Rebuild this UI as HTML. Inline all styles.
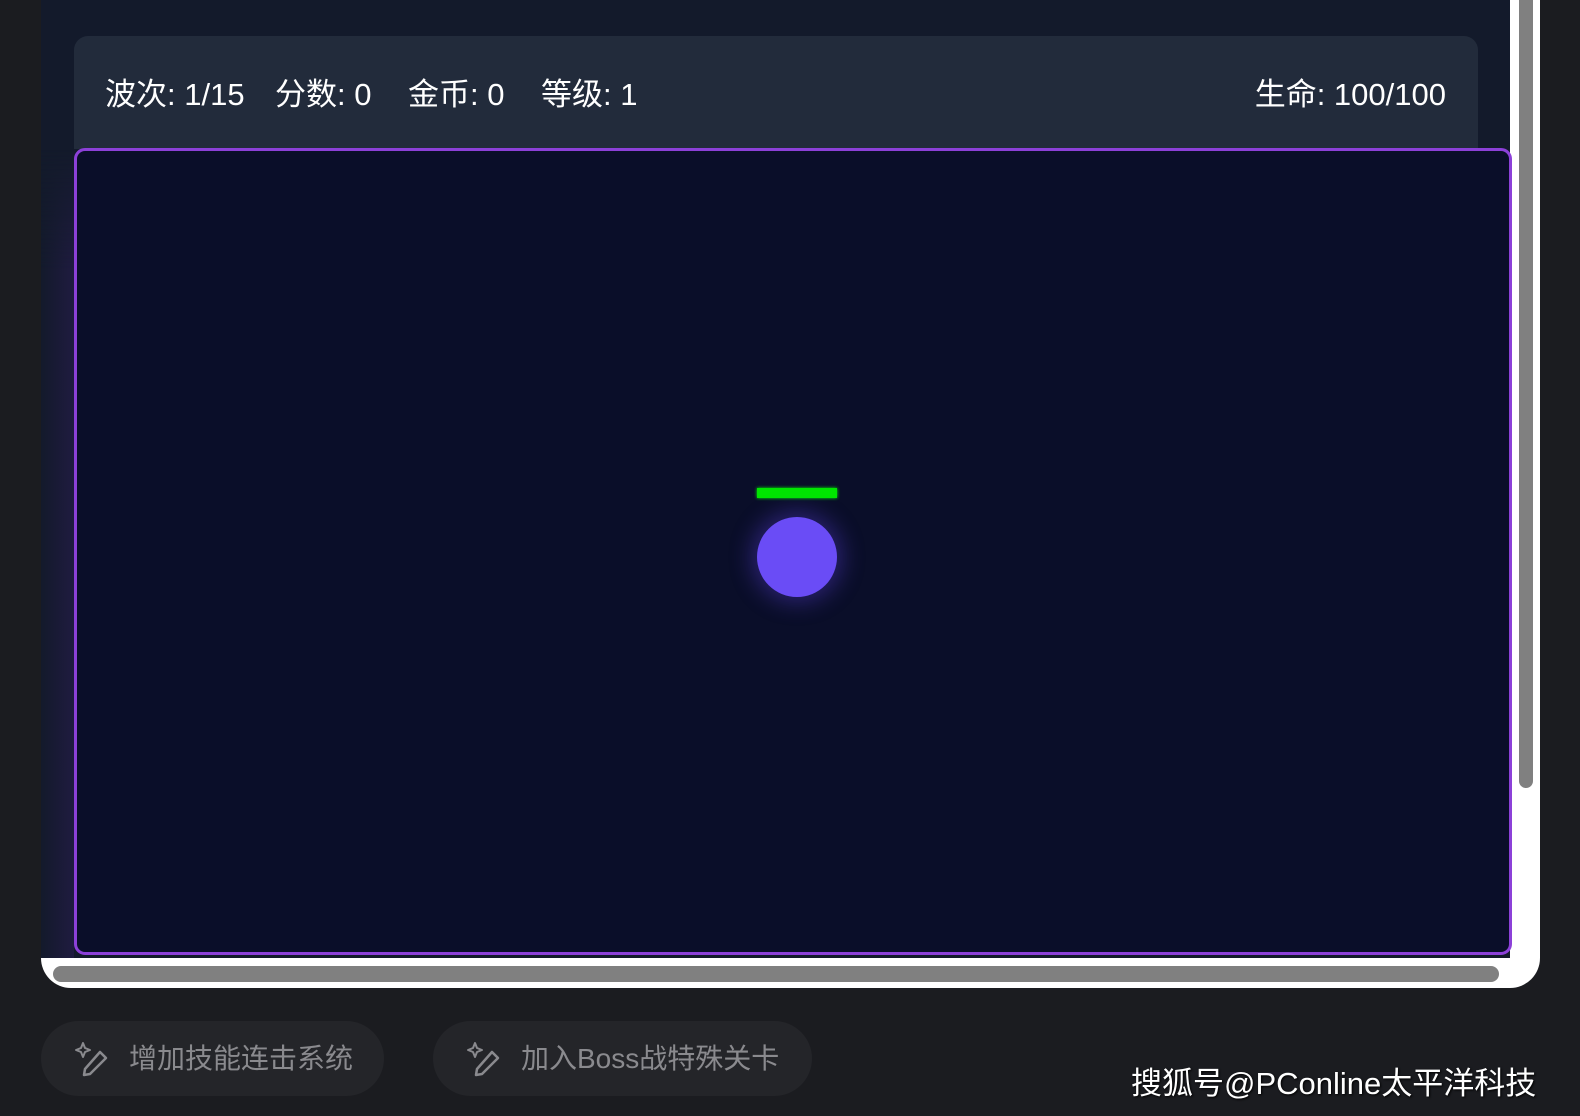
<!DOCTYPE html>
<html><head><meta charset="utf-8"><style>
body{margin:0;width:1580px;height:1116px;background:#1b1c20;position:relative;overflow:hidden;font-family:"Liberation Sans","Noto Sans CJK SC",sans-serif}
.frame{position:absolute;left:41px;top:-20px;width:1499px;height:1008px;background:#fff;border-radius:0 0 30px 30px}
.content{position:absolute;left:41px;top:0;width:1469px;height:958px;background:#131a2b}
.glow{position:absolute;left:41px;top:150px;width:33px;height:808px;background:linear-gradient(90deg,#131a2b,#1f1b40);-webkit-mask:linear-gradient(180deg,transparent,#000 120px);mask:linear-gradient(180deg,transparent,#000 120px)}
.stats{position:absolute;left:74px;top:36px;width:1404px;height:113px;background:#222b3b;border-radius:14px 14px 0 0;color:#fff;font-size:31px}
.stats span{position:absolute;top:33px}
.canvas{position:absolute;left:74px;top:148px;width:1432px;height:801px;border:3px solid #8c40d8;border-radius:11px;background:#0a0e29}
.vs{position:absolute;left:1519px;top:0;width:14px;height:788px;background:#808080;border-radius:0 0 7px 7px}
.hs{position:absolute;left:53px;top:966px;width:1446px;height:16px;background:#808080;border-radius:8px}
.btn{position:absolute;top:1021px;height:75px;background:#242529;border-radius:38px;color:#8a8a8e;font-size:28px;line-height:75px}
.btn svg{position:absolute;left:33px;top:19px}
.btn span{position:absolute;left:88px}
.wm{position:absolute;left:1131px;top:1058px;color:#fff;font-size:31px;text-shadow:1px 1px 2px #000}
</style></head><body>
<div class="frame"></div>
<div class="content"></div>
<div class="glow"></div>
<div class="stats">
<span style="left:31px">波次: 1/15</span>
<span style="left:201px">分数: 0</span>
<span style="left:334px">金币: 0</span>
<span style="left:467px">等级: 1</span>
<span style="right:32px">生命: 100/100</span>
</div>
<div class="canvas">
<div style="position:absolute;left:680px;top:337px;width:80px;height:10px;background:#00e600;box-shadow:0 0 3px #0f0"></div>
<div style="position:absolute;left:680px;top:366px;width:80px;height:80px;border-radius:50%;background:#6a4cf6;box-shadow:0 0 22px 6px rgba(100,70,240,.35)"></div>
</div>
<div class="vs"></div>
<div class="hs"></div>
<div class="btn" style="left:41px;width:343px"><svg width="38" height="38" viewBox="0 0 38 38" fill="none" stroke="#8a8a8e" stroke-width="2.5" stroke-linejoin="round"><path d="M9 3 L11 8 L16 10 L11 12 L9 17 L7 12 L2 10 L7 8Z" stroke-width="2"/><path d="M26 12 L32 18 L16 34 L10 35 L11 29Z"/></svg><span>增加技能连击系统</span></div>
<div class="btn" style="left:433px;width:379px"><svg width="38" height="38" viewBox="0 0 38 38" fill="none" stroke="#8a8a8e" stroke-width="2.5" stroke-linejoin="round"><path d="M9 3 L11 8 L16 10 L11 12 L9 17 L7 12 L2 10 L7 8Z" stroke-width="2"/><path d="M26 12 L32 18 L16 34 L10 35 L11 29Z"/></svg><span>加入Boss战特殊关卡</span></div>
<div class="wm">搜狐号@PConline太平洋科技</div>
</body></html>
